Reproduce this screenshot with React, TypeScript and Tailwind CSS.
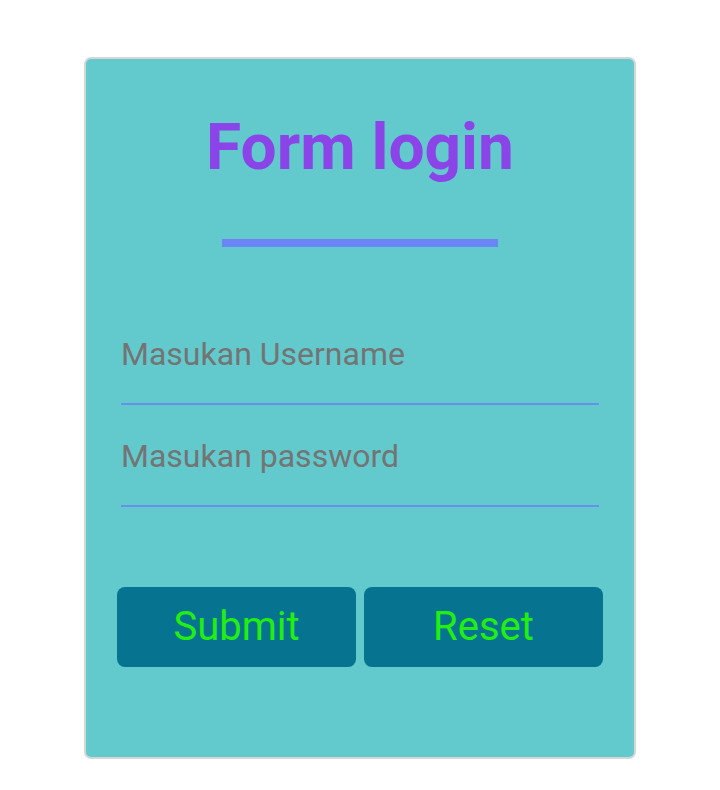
import React from 'react';

export default function App() {
  return (
    <div className="min-h-[790px] w-full bg-white pt-[57px] font-['Roboto',sans-serif]">
      <div className="mx-auto flex h-[702px] w-[552px] flex-col items-center rounded-[7px] border-2 border-[#d3d7d7] bg-[#62cacd]">
        <h1 className="mt-[57px] text-[64px] font-bold leading-none text-[#8b44e8]">Form login</h1>
        <div className="mt-[59px] h-[8px] w-[276px] bg-[#6b84f6]" />

        <form className="mt-[58px] flex w-full flex-col" onSubmit={e => e.preventDefault()}>
          <div className="flex flex-col gap-[2px] px-[35px]">
            <input
              type="text"
              placeholder="Masukan Username"
              className="h-[100px] w-full border-b-2 border-[#6690ee] bg-transparent text-[32px] text-[#333] outline-none placeholder:text-[#747474]"
            />
            <input
              type="password"
              placeholder="Masukan password"
              className="h-[100px] w-full border-b-2 border-[#6690ee] bg-transparent text-[32px] text-[#333] outline-none placeholder:text-[#747474]"
            />
          </div>

          <div className="mt-[80px] flex gap-[8px] px-[31px]">
            <button
              type="submit"
              className="h-[80px] flex-1 rounded-[8px] bg-[#067490] text-[40px] text-[#22ee11]"
            >
              Submit
            </button>
            <button
              type="reset"
              className="h-[80px] flex-1 rounded-[8px] bg-[#067490] text-[40px] text-[#22ee11]"
            >
              Reset
            </button>
          </div>
        </form>
      </div>
    </div>
  );
}
